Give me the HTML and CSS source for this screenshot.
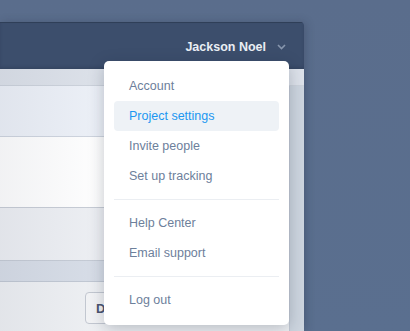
FILE: index.html
```html
<!DOCTYPE html>
<html>
<head>
<meta charset="utf-8">
<link rel="stylesheet" href="styles.css">
</head>
<body>
<div class="window">
  <div class="header">
    <span class="user">Jackson Noel</span>
    <svg class="chev" width="9" height="6" viewBox="0 0 9 6"><path d="M1 1l3.5 3.5L8 1" fill="none" stroke="#8796ad" stroke-width="1.6"/></svg>
  </div>
  <div class="body">
    <div class="toprow"></div>
    <div class="main">
      <div class="panel">
        <div class="sec sec-a"></div>
        <div class="sec sec-b"></div>
        <div class="sec sec-c"></div>
        <div class="sec sec-d"></div>
        <div class="sec sec-e"><button class="btn">Done</button></div>
      </div>
      <div class="strip"></div>
    </div>
    <div class="fade"></div>
  </div>
</div>
<div class="menu">
  <div class="item">Account</div>
  <div class="item active">Project settings</div>
  <div class="item">Invite people</div>
  <div class="item">Set up tracking</div>
  <div class="sep"></div>
  <div class="item">Help Center</div>
  <div class="item">Email support</div>
  <div class="sep"></div>
  <div class="item">Log out</div>
</div>
</body>
</html>
```

FILE: styles.css
```css
html, body { margin: 0; padding: 0; }
body {
  width: 410px;
  height: 331px;
  overflow: hidden;
  background: linear-gradient(to bottom, #5a6d8c 0%, #5a6f8f 100%);
  font-family: "Liberation Sans", Arial, sans-serif;
  position: relative;
}
.window {
  margin-top: 22px;
  width: 304px;
  height: 309px;
  display: flex;
  flex-direction: column;
  border-top-right-radius: 4px;
  overflow: hidden;
  box-shadow: 2px 0 8px rgba(30, 40, 60, 0.25);
}
.header {
  height: 46px;
  flex: none;
  background: #3c4e6c;
  border-top: 1px solid #2f3f58;
  box-shadow: inset 0 -2px 3px rgba(20, 30, 50, 0.18);
  display: flex;
  align-items: center;
  justify-content: flex-end;
  padding-right: 18px;
  gap: 11px;
}
.user {
  color: #eaeef4;
  font-weight: bold;
  font-size: 12.5px;
  padding-top: 1px;
}
.chev { margin-top: 2px; }
.body {
  flex: 1;
  position: relative;
  display: flex;
  flex-direction: column;
  background: #cfd6e0;
}
.toprow {
  height: 16px;
  background: #dde2ea;
  border-bottom: 1px solid #cdd3dc;
}
.main {
  flex: 1;
  display: flex;
}
.panel {
  width: 289px;
  display: flex;
  flex-direction: column;
  border-right: 1px solid #c3cad5;
}
.strip { flex: 1; background: #cdd5df; }
.sec-a { height: 50px; background: #edf1f8; border-bottom: 1px solid #cfd5df; }
.sec-b { height: 70px; background: #ffffff; border-bottom: 1px solid #c8cdd6; }
.sec-c { height: 52px; background: #eef0f4; border-bottom: 1px solid #c6ccd6; }
.sec-d { height: 20px; background: #d8dee8; border-bottom: 1px solid #c2c9d4; }
.sec-e {
  flex: 1;
  background: #eff1f4;
  padding: 10px 0 0 85px;
}
.btn {
  height: 32px;
  width: 70px;
  border: 1px solid #c4c9d2;
  border-radius: 4px;
  background: #f4f5f7;
  font-family: "Liberation Sans", Arial, sans-serif;
  font-weight: bold;
  font-size: 13px;
  color: #4b5672;
  text-align: left;
  padding-left: 10px;
}
.fade {
  position: absolute;
  left: 0; top: 0; bottom: 0;
  width: 110px;
  background: linear-gradient(to right, rgba(20, 30, 60, 0.06), rgba(20, 30, 60, 0));
  pointer-events: none;
}
.menu {
  position: absolute;
  left: 104px;
  top: 61px;
  width: 165px;
  padding: 10px;
  background: #ffffff;
  border-radius: 5px;
  box-shadow: 0 4px 16px rgba(20, 30, 50, 0.25);
}
.item {
  height: 30px;
  line-height: 30px;
  padding-left: 15px;
  font-size: 12.5px;
  color: #6d809b;
  border-radius: 4px;
}
.item.active {
  color: #1b97f1;
  background: #eef2f6;
}
.sep {
  height: 1px;
  background: #ebeef2;
  margin: 8px 0;
}
```
